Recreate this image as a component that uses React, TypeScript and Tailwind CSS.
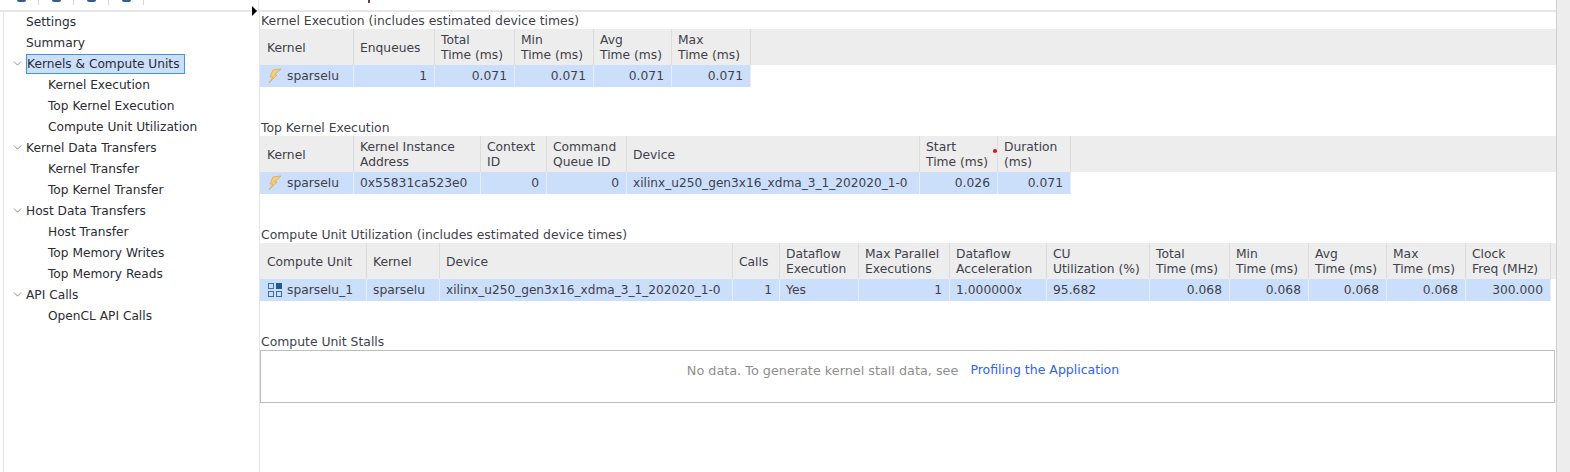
import { ChevronDown } from "lucide-react";

const font = "font-['DejaVu_Sans',sans-serif]";

type Cell = { text: string; right?: boolean; tight?: boolean };

type TableProps = {
  widths: number[];
  headers: string[][];
  cells: Cell[];
  icon: React.ReactNode;
};

const Bolt = () => (
  <svg width="16" height="16" viewBox="0 0 16 16" className="shrink-0">
    <path d="M14 1 L6 2 L3 9 L6 9 L2 15 L10 7 L7.5 7 Z" fill="#f5cf7c" stroke="#dca955" strokeWidth="0.8" />
  </svg>
);

const ComputeUnit = () => (
  <svg width="16" height="16" viewBox="0 0 16 16" className="shrink-0">
    <rect x="1.5" y="1.5" width="5" height="5" fill="none" stroke="#3b6ea5" />
    <rect x="9" y="1" width="6" height="6" fill="#1f5a96" />
    <rect x="1.5" y="9.5" width="5" height="5" fill="none" stroke="#3b6ea5" />
    <rect x="9.5" y="9.5" width="5" height="5" fill="none" stroke="#3b6ea5" />
  </svg>
);

function SectionTitle({ text, first }: { text: string; first?: boolean }) {
  return (
    <div className={`h-[17px] pl-[1px] pt-[2px] flex items-center text-[12.4px] ${first ? "" : "mt-[32px]"}`}>
      {text}
    </div>
  );
}

function DataTable({ widths, headers, cells, icon }: TableProps) {
  return (
    <div>
      <div className="flex h-9 bg-[#ededed]">
        {headers.map((lines, i) => (
          <div
            key={i}
            style={{ width: widths[i] }}
            className={`shrink-0 h-9 flex flex-col justify-center border-r border-[#dcdcdc] leading-[15px] text-[#3f3f4a] ${
              i === 0 ? "pl-[7px]" : "pl-[6px]"
            } ${lines.length === 1 ? "pt-[2px]" : "pt-[1px]"}`}
          >
            {lines.map((l) => (
              <span key={l} className="whitespace-nowrap">{l}</span>
            ))}
          </div>
        ))}
      </div>
      <div className="flex h-[22px]">
        {cells.map((c, i) => (
          <div
            key={i}
            style={{ width: widths[i] }}
            className={`shrink-0 h-[22px] bg-[#cbdffb] border-r border-[#e6eefa] flex items-center whitespace-nowrap text-[#3f3f4a] ${
              c.right ? "justify-end pr-[7px]" : i === 0 ? "pl-[7px]" : "pl-[6px]"
            } ${c.tight ? "text-[12.15px]" : ""}`}
          >
            {i === 0 && <span className="mr-[4px] flex">{icon}</span>}
            {c.text}
          </div>
        ))}
      </div>
    </div>
  );
}

const nav = [
  { label: "Settings", level: 0 },
  { label: "Summary", level: 0 },
  { label: "Kernels & Compute Units", level: 0, open: true, selected: true },
  { label: "Kernel Execution", level: 1 },
  { label: "Top Kernel Execution", level: 1 },
  { label: "Compute Unit Utilization", level: 1 },
  { label: "Kernel Data Transfers", level: 0, open: true },
  { label: "Kernel Transfer", level: 1 },
  { label: "Top Kernel Transfer", level: 1 },
  { label: "Host Data Transfers", level: 0, open: true },
  { label: "Host Transfer", level: 1 },
  { label: "Top Memory Writes", level: 1 },
  { label: "Top Memory Reads", level: 1 },
  { label: "API Calls", level: 0, open: true },
  { label: "OpenCL API Calls", level: 1 },
];

const device = "xilinx_u250_gen3x16_xdma_3_1_202020_1-0";

export default function App() {
  return (
    <div className={`${font} relative w-[1570px] h-[472px] overflow-hidden bg-white text-[12.3px] text-[#3f3f4a] flex`}>
      <div className="flex-1 min-w-0 flex flex-col">
        <div className="h-[12px] shrink-0 flex border-b-2 border-[#e6e6e6] pl-[3px]">
          <div className="w-[256px] border-r border-[#e6e6e6] flex pl-[1px]">
            {[0, 1, 2, 3].map((i) => (
              <div key={i} className="w-[35px] h-[5px] border-r border-[#d8d8d8] flex justify-center">
                <div className="w-[9px] h-[2px] bg-[#2f5f8f] rounded-b-sm" />
              </div>
            ))}
          </div>
          <div className="pl-[109px]">
            <div className="w-[2px] h-[3px] bg-[#6b3a3a]" />
          </div>
        </div>
        <div className="flex flex-1 min-h-0">
          <div className="w-[259px] shrink-0 -mt-px text-[12.2px]">
            <div className="ml-[3px] h-full border-l border-[#e6e6e6]">
              {nav.map((n) => (
                <div key={n.label} className={`h-[21px] flex items-center ${n.level === 1 ? "pl-[44px]" : "pl-[22px]"} relative`}>
                  {n.open && <ChevronDown size={13} strokeWidth={1.5} className="absolute left-[7px] top-[4px] text-[#777]" />}
                  <span
                    className={`whitespace-nowrap leading-[18px] text-[#2b2b33] ${
                      n.selected ? "bg-[#cbdffb] border border-[#3f97e0] h-5 w-[159px]" : ""
                    }`}
                  >
                    {n.label}
                  </span>
                </div>
              ))}
            </div>
          </div>
          <div className="flex-1 min-w-0 border-l border-[#e6e6e6]">
            <SectionTitle first text="Kernel Execution (includes estimated device times)" />
            <DataTable
              icon={<Bolt />}
              widths={[94, 81, 80, 79, 78, 79]}
              headers={[["Kernel"], ["Enqueues"], ["Total", "Time (ms)"], ["Min", "Time (ms)"], ["Avg", "Time (ms)"], ["Max", "Time (ms)"]]}
              cells={[
                { text: "sparselu" },
                { text: "1", right: true },
                { text: "0.071", right: true },
                { text: "0.071", right: true },
                { text: "0.071", right: true },
                { text: "0.071", right: true },
              ]}
            />
            <SectionTitle text="Top Kernel Execution" />
            <div className="relative">
              <DataTable
                icon={<Bolt />}
                widths={[94, 127, 66, 80, 293, 78, 73]}
                headers={[["Kernel"], ["Kernel Instance", "Address"], ["Context", "ID"], ["Command", "Queue ID"], ["Device"], ["Start", "Time (ms)"], ["Duration", "(ms)"]]}
                cells={[
                  { text: "sparselu" },
                  { text: "0x55831ca523e0" },
                  { text: "0", right: true },
                  { text: "0", right: true },
                  { text: device, tight: true },
                  { text: "0.026", right: true },
                  { text: "0.071", right: true },
                ]}
              />
              {/* sort marker on the Start Time column */}
              <div className="absolute left-[733px] top-[13px] w-[4px] h-[4px] rounded-full bg-[#e01010]" />
            </div>
            <SectionTitle text="Compute Unit Utilization (includes estimated device times)" />
            <DataTable
              icon={<ComputeUnit />}
              widths={[107, 73, 293, 47, 79, 91, 97, 103, 80, 79, 78, 79, 85]}
              headers={[["Compute Unit"], ["Kernel"], ["Device"], ["Calls"], ["Dataflow", "Execution"], ["Max Parallel", "Executions"], ["Dataflow", "Acceleration"], ["CU", "Utilization (%)"], ["Total", "Time (ms)"], ["Min", "Time (ms)"], ["Avg", "Time (ms)"], ["Max", "Time (ms)"], ["Clock", "Freq (MHz)"]]}
              cells={[
                { text: "sparselu_1" },
                { text: "sparselu" },
                { text: device, tight: true },
                { text: "1", right: true },
                { text: "Yes" },
                { text: "1", right: true },
                { text: "1.000000x" },
                { text: "95.682" },
                { text: "0.068", right: true },
                { text: "0.068", right: true },
                { text: "0.068", right: true },
                { text: "0.068", right: true },
                { text: "300.000", right: true },
              ]}
            />
            <SectionTitle text="Compute Unit Stalls" />
            <div className="h-[53px] mr-[1px] border border-[#bdbdbd] flex items-start justify-center pt-[10px] pr-[9px]">
              <span className="text-[#8f8f8f] text-[12.8px]">No data. To generate kernel stall data, see</span>
              <span className="text-[#2f62f0] text-[12.5px] ml-3">Profiling the Application</span>
            </div>
          </div>
        </div>
      </div>
      <div className="w-[14px] shrink-0 bg-[#ededed] border-l border-[#cfcfcf]" />
      {/* sash arrow between the tree and the report */}
      <div className="absolute left-[252px] top-[6px] w-0 h-0 border-y-[5px] border-y-transparent border-l-[5px] border-l-black" />
    </div>
  );
}
